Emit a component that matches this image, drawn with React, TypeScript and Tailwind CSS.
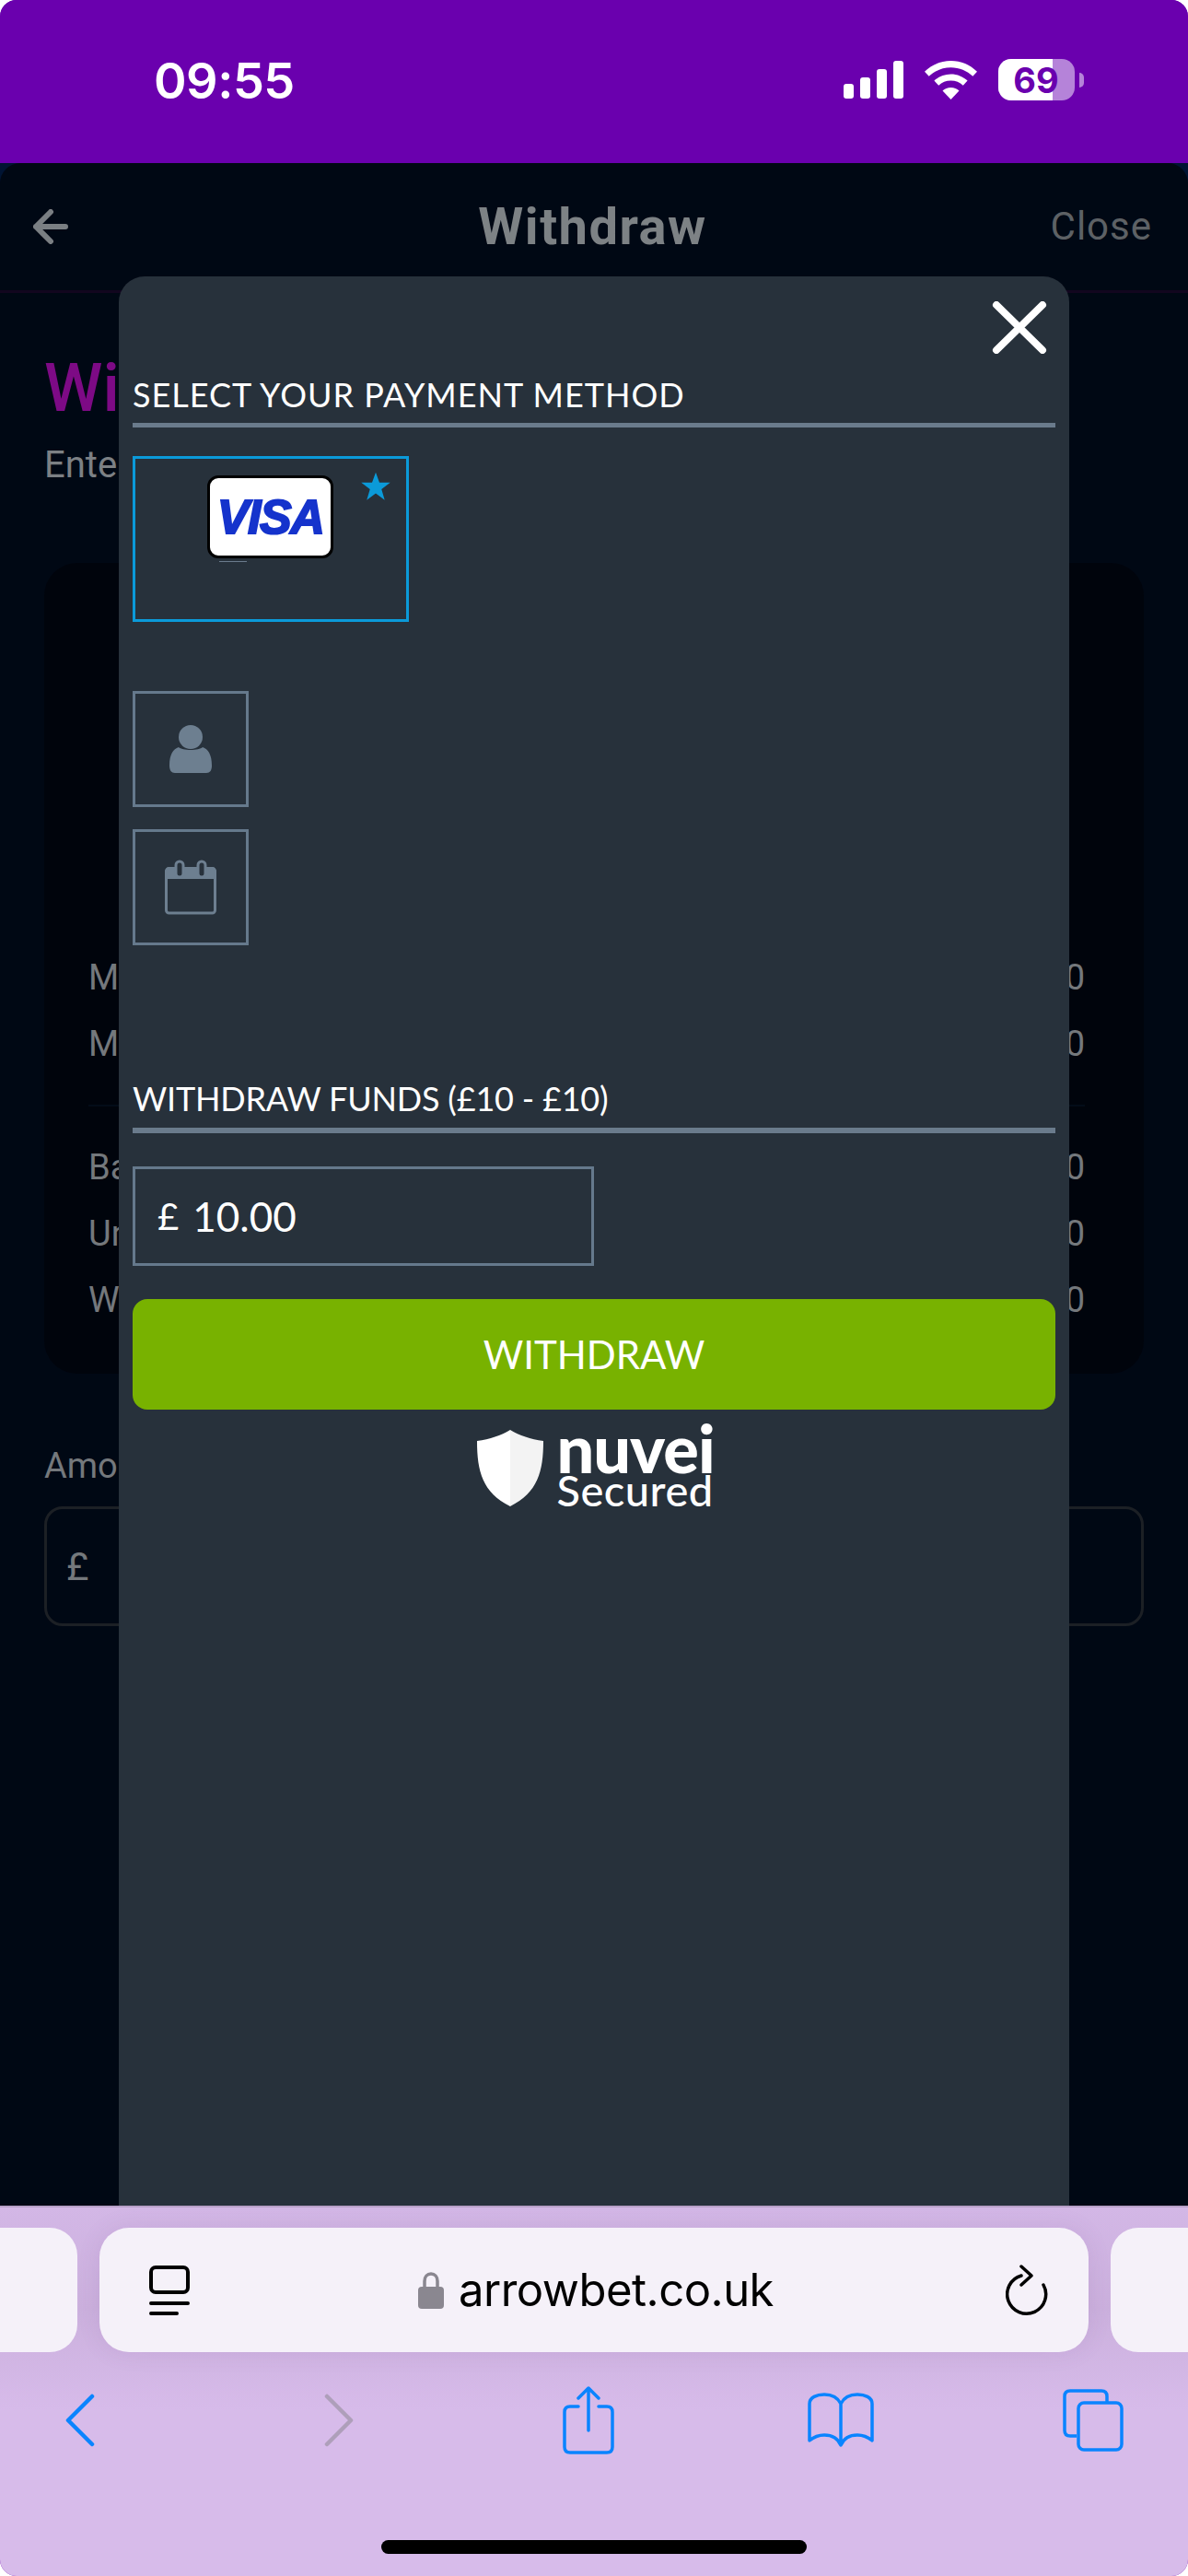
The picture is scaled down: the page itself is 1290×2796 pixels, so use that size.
import React from "react";

const ios = "font-['Inter',sans-serif]";
const pageFont = "font-['Roboto',sans-serif]";
const payFont = "font-['Lato',sans-serif]";

const StatusBar = () => (
    <div className={`${ios} flex h-[177px] w-full shrink-0 items-start justify-between bg-[#6a00ae] pl-[167px] pr-[113px] pt-[56px] text-white`}>
        <div className="text-[54px] font-semibold leading-[64px] tracking-[-0.5px]">09:55</div>
        <div className="flex items-center gap-[23px] pt-[8px]">
            <svg width="65" height="41" viewBox="0 0 65 41" fill="#fff">
                <rect x="0" y="25" width="11" height="16" rx="3" />
                <rect x="18" y="18" width="11" height="23" rx="3" />
                <rect x="36" y="9" width="11" height="32" rx="3" />
                <rect x="54" y="0" width="11" height="41" rx="3" />
            </svg>
            <svg width="57" height="42" viewBox="0 0 57 42" fill="#fff">
                <path d="M28.5 0C39.5 0 49.5 4.4 57 11.8L52.3 16.8C46.1 10.8 37.7 7.2 28.5 7.2S10.900 10.800 4.700 16.800L0 11.800C7.500 4.400 17.500 0 28.500 0Z" />
                <path d="M28.500 14.500C35.500 14.500 41.800 17.200 46.600 21.600L41.800 26.700C38.300 23.500 33.600 21.600 28.500 21.600S18.700 23.500 15.200 26.700L10.400 21.600C15.200 17.200 21.500 14.500 28.500 14.500Z" />
                <path d="M28.500 29C32 29 35.100 30.300 37.500 32.400L28.500 42L19.500 32.400C21.900 30.300 25 29 28.500 29Z" />
            </svg>
            <div className="flex items-center gap-[5px]">
                <div className="relative h-[45px] w-[83px] overflow-hidden rounded-[14px] bg-[#b583d9]">
                    <div className="h-full w-[59px] bg-white" />
                    <div className="absolute inset-0 flex items-center justify-center pr-[1px] text-[38px] font-bold leading-none text-[#6a00ae]">
                        69
                    </div>
                </div>
                <div className="h-[16px] w-[5px] rounded-r-full bg-[#b583d9]" />
            </div>
        </div>
    </div>
);

const LimitRow = ({ label }: { label: string }) => (
    <div className="flex items-center justify-between text-[38px] leading-[72px] text-[#74787c]">
        <span>{label}</span>
        <span>£10</span>
    </div>
);

// the withdraw page behind the payment popup
const PageBehind = () => (
    <div className={`${pageFont} h-full w-full bg-[#001433]`}>
        <div className="h-full w-full rounded-t-[22px] bg-[#000814]">
            <div className="grid h-[141px] grid-cols-3 items-center border-b-[3px] border-[#12061f] pl-[36px] pr-[39px]">
                <svg width="38" height="38" viewBox="0 0 38 38" fill="none" stroke="#7a7f83" strokeWidth="6" strokeLinecap="round" strokeLinejoin="round">
                    <path d="M19 3L3 19L19 35M3 19H35" />
                </svg>
                <div className="text-center text-[56px] font-bold leading-none tracking-[1.5px] text-[#7d8285]">Withdraw</div>
                <div className="text-right text-[42px] leading-none tracking-[1px] text-[#5d6165]">Close</div>
            </div>
            <div className="px-[48px]">
                <div className="pt-[62px] text-[72px] font-medium leading-[84px] text-[#7d0a85]">Withdraw Funds</div>
                <div className="pt-[17px] text-[40px] leading-[48px] text-[#7c8084]">Enter the amount to withdraw</div>
                <div className="mt-[82px] h-[880px] rounded-[36px] bg-[#00040c] pl-[48px] pr-[64px] pt-[414px]">
                    <LimitRow label="Min" />
                    <LimitRow label="Max" />
                    <div className="my-[30px] h-[2px] bg-[#030c18]" />
                    <LimitRow label="Balance" />
                    <LimitRow label="Unplayed" />
                    <LimitRow label="Withdrawable" />
                </div>
                <div className="pt-[72px] text-[38px] leading-[56px] text-[#74787c]">Amount</div>
                <div className="mt-[16px] flex h-[130px] items-center rounded-[20px] border-[3px] border-[#1c2025] pl-[21px] text-[42px] text-[#74787c]">£</div>
            </div>
        </div>
    </div>
);

const VisaCard = () => (
    <div className="flex h-[90px] w-[137px] items-center justify-center rounded-[12px] border-[3px] border-black bg-white">
        <span className="font-['Liberation_Sans',sans-serif] text-[52px] font-bold italic leading-none tracking-[-1.5px] text-[#1533cc] [-webkit-text-stroke:2px_#1533cc]">
            VISA
        </span>
    </div>
);

const PaymentPopup = () => (
    <div className={`${payFont} absolute bottom-0 left-[129px] top-[123px] w-[1032px] rounded-t-[28px] bg-[#27313b] px-[15px] text-white`}>
        <button className="absolute right-[24px] top-[27px]">
            <svg width="60" height="57" viewBox="0 0 60 57" fill="none" stroke="#fff" strokeWidth="8" strokeLinecap="round">
                <path d="M5 4L55 53M55 4L5 53" />
            </svg>
        </button>

        <div className="pt-[107px] text-[36px] leading-[42px] tracking-[1px]">SELECT YOUR PAYMENT METHOD</div>
        <div className="mt-[10px] h-[5px] bg-[#6a7b8c]" />

        <div className="relative mt-[31px] flex h-[180px] w-[300px] justify-center border-[3px] border-[#0b9ad9] pt-[18px]">
            <div className="relative mr-[1px]">
                <VisaCard />
                <div className="ml-[13px] mt-[3px] h-[1px] w-[30px] bg-[#6a7b8c]" />
            </div>
            <svg className="absolute left-[245px] top-[14px]" width="32" height="32" viewBox="0 0 24 24" fill="#0b9ad9">
                <path d="M12 0.5L15 8.800H23.800L16.700 14.200L19.300 23L12 17.700L4.700 23L7.300 14.200L0.200 8.800H9L12 0.500Z" />
            </svg>
        </div>

        <div className="mt-[75px] flex h-[126px] w-[126px] items-center justify-center border-[3px] border-[#65798c]">
            <svg width="48" height="52" viewBox="0 0 48 52" fill="#6d7f90">
                <circle cx="24" cy="13" r="13" />
                <path d="M11 24C15 28 33 28 37 24C43 26 47 32 47 44C47 49 45 52 41 52H7C3 52 1 49 1 44C1 32 5 26 11 24Z" />
            </svg>
        </div>
        <div className="mt-[24px] flex h-[126px] w-[126px] items-center justify-center border-[3px] border-[#65798c]">
            <svg width="56" height="60" viewBox="0 0 56 60" fill="none" stroke="#6d7f90">
                <rect x="1.500" y="10" width="53" height="48" rx="3" strokeWidth="3" />
                <path d="M0 13C0 10 2 8 4 8H52C54 8 56 10 56 13V21H0Z" fill="#6d7f90" stroke="none" />
                <rect x="12" y="2" width="8" height="17" rx="4" fill="#27313b" strokeWidth="3" />
                <rect x="36" y="2" width="8" height="17" rx="4" fill="#27313b" strokeWidth="3" />
            </svg>
        </div>

        <div className="pt-[145px] text-[36px] leading-[42px] tracking-[-0.2px]">WITHDRAW FUNDS (£10 - £10)</div>
        <div className="mt-[11px] h-[6px] bg-[#6a7b8c]" />

        <div className="mt-[36px] flex h-[108px] w-[501px] items-center border-[3px] border-[#65798c] pl-[24px] text-[44px]">
            <span className="text-[40px]">£</span>
            <span className="ml-[15px]">10.00</span>
        </div>

        <button className="mt-[36px] flex h-[120px] w-full items-center justify-center rounded-[16px] bg-[#78b200] text-[42px] leading-none">
            WITHDRAW
        </button>

        <div className="mt-[15px] flex items-start justify-center pl-[2px]">
            <svg className="mt-[7px]" width="72" height="83" viewBox="0 0 72 83">
                <path d="M36 0C46 6 58 10 72 12C72 45 66 68 36 83Z" fill="#f3f3f3" />
                <path d="M36 0C26 6 14 10 0 12C0 45 6 68 36 83Z" fill="#fff" />
            </svg>
            <div className="ml-[15px] flex w-[170px] flex-col">
                <div className="text-[72px] font-black leading-[52px] tracking-[-1px]">nuvei</div>
                <div className="text-[47px] font-medium leading-[40px] tracking-[0.5px]">Secured</div>
            </div>
        </div>
    </div>
);

const SafariBar = () => (
    <div className={`${ios} relative h-[402px] w-full shrink-0 border-t-2 border-[#b8a0c8] bg-[#d7bbea]`}>
        <div className="h-[220px] bg-gradient-to-b from-[#d3b7e6] via-[#cbb0dd] to-[#d7bbea]">
            <div className="flex justify-between pt-[22px]">
                <div className="h-[135px] w-[84px] rounded-r-[30px] bg-[#f5f1f9]" />
                <div className="flex h-[135px] w-[1074px] items-center justify-between rounded-[32px] bg-[#f5f1f9] pl-[54px] pr-[44px] shadow-[0_0_24px_rgba(120,80,150,0.12)]">
                    <svg width="44" height="54" viewBox="0 0 44 54" fill="none" stroke="#000" strokeWidth="4" strokeLinecap="round">
                        <rect x="2" y="2" width="40" height="27" rx="5" />
                        <path d="M2 41H42M2 52H30" />
                    </svg>
                    <div className="flex items-center gap-[16px] pr-[4px]">
                        <svg width="28" height="40" viewBox="0 0 28 40">
                            <path d="M7 18V10C7 5 10 2 14 2S21 5 21 10V18" fill="none" stroke="#8a8790" strokeWidth="3.500" />
                            <rect x="0" y="16" width="28" height="24" rx="4" fill="#8a8790" />
                        </svg>
                        <span className="text-[49px] leading-none tracking-[-0.5px] text-black">arrowbet.co.uk</span>
                    </div>
                    <svg width="46" height="56" viewBox="0 0 46 56" fill="none" stroke="#000" strokeWidth="3.500" strokeLinecap="round" strokeLinejoin="round">
                        <path d="M17 12A21 21 0 1 0 41 22" />
                        <path d="M17 2L28 12L17 22" />
                    </svg>
                </div>
                <div className="h-[135px] w-[84px] rounded-l-[30px] bg-[#f5f1f9]" />
            </div>
        </div>
        <div className="absolute inset-x-0 top-[186px] flex h-[90px] items-center">
            <svg className="ml-[71px]" width="32" height="58" viewBox="0 0 32 58" fill="none" stroke="#0a84ff" strokeWidth="4.500" strokeLinecap="round" strokeLinejoin="round">
                <path d="M29 3L3 29L29 55" />
            </svg>
            <svg className="ml-[249px]" width="32" height="58" viewBox="0 0 32 58" fill="none" stroke="#ae9fba" strokeWidth="4.500" strokeLinecap="round" strokeLinejoin="round">
                <path d="M3 3L29 29L3 55" />
            </svg>
            <svg className="ml-[227px]" width="56" height="74" viewBox="0 0 56 74" fill="none" stroke="#0a84ff" strokeWidth="3.500" strokeLinecap="round" strokeLinejoin="round">
                <path d="M17 22H8C4 22 2 24 2 28V66C2 70 4 72 8 72H48C52 72 54 70 54 66V28C54 24 52 22 48 22H39" />
                <path d="M28 48V3M17 13L28 2L39 13" />
            </svg>
            <svg className="ml-[210px]" width="72" height="60" viewBox="0 0 72 60" fill="none" stroke="#0a84ff" strokeWidth="3.500" strokeLinecap="round" strokeLinejoin="round">
                <path d="M36 12C33 6 27 2 18 2C10 2 2 5 2 12V52C8 47 12 46 18 46C27 46 33 50 36 57C39 50 45 46 54 46C60 46 64 47 70 52V12C70 5 62 2 54 2C45 2 39 6 36 12ZM36 12V57" />
            </svg>
            <svg className="ml-[205px]" width="66" height="68" viewBox="0 0 66 68" fill="none" stroke="#0a84ff" strokeWidth="3.500" strokeLinejoin="round">
                <path d="M15 51H8C4 51 2 49 2 45V8C2 4 4 2 8 2H42C46 2 48 4 48 8V15" />
                <rect x="17" y="15" width="47" height="51" rx="6" />
            </svg>
        </div>
        <div className="absolute bottom-[24px] left-[414px] h-[15px] w-[462px] rounded-full bg-black" />
    </div>
);

export default function App() {
    return (
        <div className="flex h-[2796px] w-[1290px] flex-col overflow-hidden rounded-[18px] bg-[#6a00ae]">
            <StatusBar />
            <div className="relative min-h-0 flex-1 overflow-hidden">
                <PageBehind />
                <PaymentPopup />
            </div>
            <SafariBar />
        </div>
    );
}
